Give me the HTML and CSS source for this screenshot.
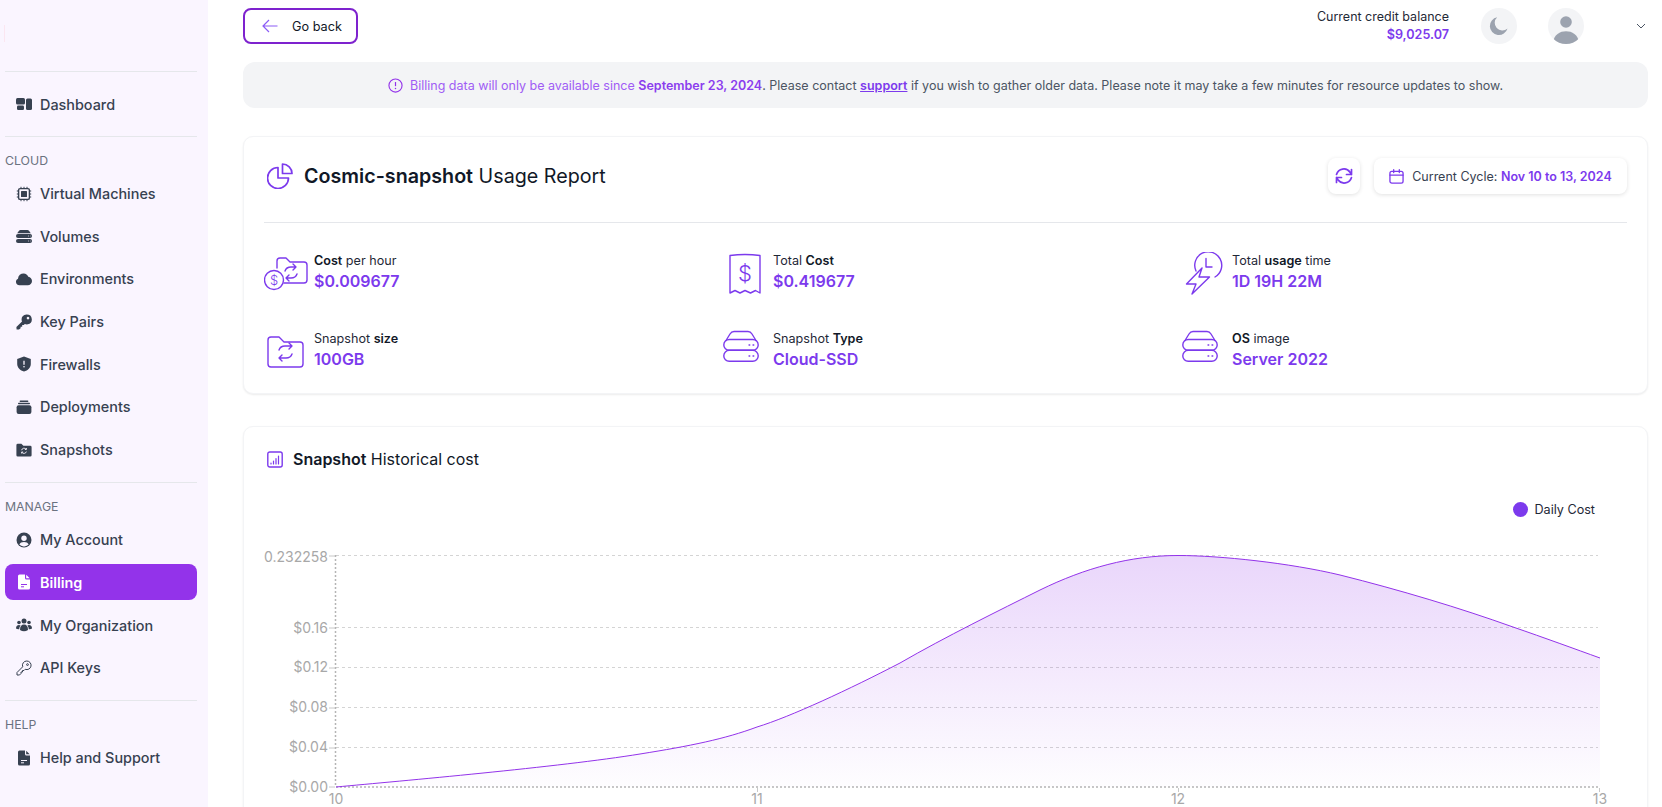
FILE: index.html
```html
<!DOCTYPE html>
<html lang="en">
<head>
    <meta charset="UTF-8">
    <title>Cosmic-snapshot Usage Report</title>
    <link rel="stylesheet" href="styles.css">
</head>
<body>
    <aside class="sidebar">
        <div class="logo"></div>
        <div class="nav-section nav-first">
            <a class="nav-item"><svg viewBox="0 0 16 16"><rect x="0" y="2" width="9" height="6.5" rx="1.5"/><rect x="1" y="9.5" width="7" height="4.5" rx="1.2"/><rect x="10" y="2.5" width="6" height="11.5" rx="1.5"/></svg>Dashboard</a>
        </div>
        <div class="nav-section">
            <div class="nav-label">CLOUD</div>
            <a class="nav-item"><svg viewBox="0 0 16 16"><rect x="2.6" y="2.6" width="10.8" height="10.8" rx="1.5" fill="none" stroke="#374151" stroke-width="1.4"/><rect x="5" y="5" width="6" height="6" rx=".5"/><path d="M5 .8v1.4M8 .8v1.4M11 .8v1.4M5 13.8v1.4M8 13.8v1.4M11 13.8v1.4M.8 5h1.4M.8 8h1.4M.8 11h1.4M13.8 5h1.4M13.8 8h1.4M13.8 11h1.4" stroke="#374151" stroke-width="1" fill="none"/></svg>Virtual Machines</a>
            <a class="nav-item"><svg viewBox="0 0 16 16"><path d="M1.2 5.2 3 2.8Q3.6 2 4.6 2h6.8q1 0 1.6.8l1.8 2.4z"/><rect x="0" y="6" width="16" height="4" rx="2"/><rect x="0" y="11" width="16" height="4" rx="2"/><path d="M12 8h.8M14 8h.5M12 13h.8M14 13h.5" stroke="#faf5ff" stroke-width=".8"/></svg>Volumes</a>
            <a class="nav-item"><svg viewBox="0 0 16 16"><path d="M3.4 14.2A3.4 3.4 0 0 1 2 7.7 5.6 5.6 0 0 1 7.8 2.4c2 0 3.8 1.3 4.5 3.3 2.1.3 3.7 2 3.7 4.2 0 2.4-1.9 4.3-4.2 4.3z"/></svg>Environments</a>
            <a class="nav-item"><svg viewBox="0 0 16 16"><path d="M10.8.4a5 5 0 0 1 1 9.9 5 5 0 0 1-3-.4l-1 1.2H6.2v1.6H4.6v1.6L3 15.6H.6L.4 13l5.6-5.6A5 5 0 0 1 10.8.4zm1.2 2.4a1.3 1.3 0 1 0 .01 0z" fill-rule="evenodd"/></svg>Key Pairs</a>
            <a class="nav-item"><svg viewBox="0 0 16 16"><path d="M8 .6 14.8 3v5c0 3.8-3 6.4-6.8 7.5C4.2 14.4 1.2 11.8 1.2 8V3z"/><path d="M8 4.8v4" stroke="#faf5ff" stroke-width="1.3"/><circle cx="8" cy="10.8" r=".8" fill="#faf5ff"/></svg>Firewalls</a>
            <a class="nav-item"><svg viewBox="0 0 16 16"><rect x="0.6" y="6.2" width="14.8" height="8.8" rx="2"/><rect x="2" y="3.8" width="12" height="1.5" rx=".7"/><rect x="3.6" y="1.6" width="8.8" height="1.4" rx=".7"/></svg>Deployments</a>
            <a class="nav-item"><svg viewBox="0 0 16 16"><path d="M.4 3.2Q.4 1.8 1.8 1.8h3.6l2 2h6.8q1.4 0 1.4 1.4v8q0 1.4-1.4 1.4H1.8q-1.4 0-1.4-1.4z"/><path d="M5.6 8.2A2.5 2.5 0 0 1 10 7.2m.4-1.2v1.5H8.9M10.4 9.6A2.5 2.5 0 0 1 6 10.4m-.4 1.1V10h1.5" stroke="#faf5ff" stroke-width=".9" fill="none"/></svg>Snapshots</a>
        </div>
        <div class="nav-section">
            <div class="nav-label">MANAGE</div>
            <a class="nav-item"><svg viewBox="0 0 16 16"><circle cx="8" cy="8" r="7.5"/><circle cx="8" cy="6.2" r="2.7" fill="#faf5ff"/><path d="M3.3 12.6C4 10.6 5.8 9.9 8 9.9s4 .7 4.7 2.7A6 6 0 0 1 8 14.4a6 6 0 0 1-4.7-1.8z" fill="#faf5ff"/></svg>My Account</a>
            <a class="nav-item active"><svg viewBox="0 0 16 16"><path d="M2 2q0-1.5 1.5-1.5H9V4q0 1.5 1.5 1.5H14v8.500q0 1.500-1.500 1.500h-9Q2 15.500 2 14z" fill="#fff"/><path d="M10.200.8 13.700 4.300h-3.500z" fill="#fff"/><path d="M5 10.500h6M5 12.800h3" stroke="#9333ea" stroke-width="1"/></svg>Billing</a>
            <a class="nav-item"><svg viewBox="0 0 16 16"><circle cx="8" cy="4" r="2.5"/><circle cx="3" cy="5.5" r="1.8"/><circle cx="13" cy="5.5" r="1.8"/><path d="M4 13q0-5.500 4-5.500t4 5.500q-2 1.200-4 1.200T4 13z"/><path d="M0 11.500Q0 8 3 8q1 0 1.600.5Q3.200 10 3.200 12.300 1 12.500 0 11.500zM16 11.500Q16 8 13 8q-1 0-1.600.5 1.400 1.500 1.400 3.800 2.200.2 3.200-.8z"/></svg>My Organization</a>
            <a class="nav-item"><svg viewBox="0 0 16 16" class="line-icon"><path d="M10.800 1a4.300 4.300 0 1 1-1.600 8.300L8 10.500H6.500V12H5v1.500L3.500 15H1v-2.500l5.700-5.700A4.300 4.300 0 0 1 10.800 1z"/><circle cx="11.500" cy="4.600" r=".9"/></svg>API Keys</a>
        </div>
        <div class="nav-section">
            <div class="nav-label">HELP</div>
            <a class="nav-item"><svg viewBox="0 0 16 16"><path d="M2 2q0-1.500 1.500-1.500H9V4q0 1.500 1.500 1.500H14v8.500q0 1.500-1.500 1.500h-9Q2 15.500 2 14z"/><path d="M10.200.8 13.700 4.300h-3.500z"/><path d="M5 10.500h6M5 12.800h3" stroke="#faf5ff" stroke-width="1"/></svg>Help and Support</a>
        </div>
    </aside>

    <main class="main">
        <header class="topbar">
            <a class="back-btn">
                <svg viewBox="0 0 16 14" width="16" height="14" class="back-arrow"><path d="M15.500 7H1M7 1 1 7l6 6"/></svg>
                Go back
            </a>
            <div class="top-right">
                <div class="credit">
                    <div>Current credit balance</div>
                    <strong>$9,025.07</strong>
                </div>
                <div class="round-btn moon"><svg viewBox="0 0 20 20" width="20" height="20"><path d="M8.200 1.200A9 9 0 1 0 18.500 12.500 7.500 7.500 0 0 1 8.200 1.200z" fill="#9ca3af"/></svg></div>
                <div class="round-btn avatar"><svg viewBox="0 0 36 36" width="36" height="36"><circle cx="18" cy="14" r="5.800" fill="#9ca3af"/><path d="M4.500 36C6 26 12 23.200 18 23.200S30 26 31.500 36z" fill="#9ca3af"/></svg></div>
                <svg class="chevron" viewBox="0 0 10 6" width="10" height="6"><path d="M1 1l4 4 4-4"/></svg>
            </div>
        </header>

        <div class="notice">
            <svg viewBox="0 0 16 16" width="15" height="15"><circle cx="8" cy="8" r="7" fill="none" stroke="#9333ea" stroke-width="1.200"/><path d="M8 4.300v4.400" stroke="#9333ea" stroke-width="1.300"/><circle cx="8" cy="11.200" r=".8" fill="#9333ea"/></svg>
            <p><span class="notice-accent">Billing data will only be available since <b>September 23, 2024</b></span>. Please contact <a class="notice-link">support</a> if you wish to gather older data. Please note it may take a few minutes for resource updates to show.</p>
        </div>

        <section class="card report-card">
            <div class="report-head">
                <h1>
                    <svg viewBox="0 0 26 26" width="26" height="26" class="stat-line thick"><path d="M11 4.500a10.500 10.500 0 1 0 10.500 10.500H11z"/><path d="M15.500 1a9.500 9.500 0 0 1 9.500 9.500h-9.500z"/></svg>
                    <span><b>Cosmic-snapshot</b> Usage Report</span>
                </h1>
                <div class="head-actions">
                    <div class="ghost-btn refresh">
                        <svg viewBox="0 0 18 18" width="18" height="18" class="stat-line thick"><path d="M1.500 7.500A7.600 7.600 0 0 1 15 5.200l1.500 2.300M16.500 2.500v5h-5M16.500 10.500A7.600 7.600 0 0 1 3 12.800l-1.500-2.300M1.500 15.500v-5h5"/></svg>
                    </div>
                    <div class="ghost-btn cycle">
                        <svg viewBox="0 0 16 16" width="15" height="15" class="stat-line"><rect x="1" y="2.500" width="14" height="12.500" rx="2"/><path d="M1 6.500h14M5 .8v3M11 .8v3"/></svg>
                        <span>Current Cycle: <b>Nov 10 to 13, 2024</b></span>
                    </div>
                </div>
            </div>
            <div class="stats">
                <div class="stat">
                    <svg viewBox="0 0 50 46" class="stat-line"><path d="M13 16V9a3 3 0 0 1 3-3h6l4 4h14a3 3 0 0 1 3 3v15a3 3 0 0 1-3 3H20"/><circle cx="10" cy="28" r="9.500"/><text x="10" y="33" class="icon-dollar-sm">$</text><path d="M21 19c1-3 3-4 6-4h5m-3-3 3 3-3 3M33 22c-1 3-3 4-6 4h-5m3 3-3-3 3-3"/></svg>
                    <div><div class="stat-label"><b>Cost</b> per hour</div><div class="stat-value">$0.009677</div></div>
                </div>
                <div class="stat">
                    <svg viewBox="0 0 50 46" class="stat-line"><path d="M7 3.500Q22 1.500 37 3.500V41l-4.500-2.500-5 2.500-5.500-2.500-5 2.500-5-2.500L7 41z"/><text x="22" y="29" class="icon-dollar">$</text></svg>
                    <div><div class="stat-label">Total <b>Cost</b></div><div class="stat-value">$0.419677</div></div>
                </div>
                <div class="stat">
                    <svg viewBox="0 0 50 46" class="stat-line"><path d="M14 19A13.500 13.500 0 1 1 33 25"/><path d="M24 6.500V15h6"/><path d="M20 16 4.500 32H14L10 42l17.500-17H17z"/></svg>
                    <div><div class="stat-label">Total <b>usage</b> time</div><div class="stat-value">1D 19H 22M</div></div>
                </div>
                <div class="stat">
                    <svg viewBox="0 0 50 46" class="stat-line"><path d="M4 10a3 3 0 0 1 3-3h8l5 5h16a3 3 0 0 1 3 3v19a3 3 0 0 1-3 3H7a3 3 0 0 1-3-3z"/><path d="M15 20c1-3 3-4 6-4h7m-3-3 3 3-3 3M28 24c-1 3-3 4-6 4h-7m3 3-3-3 3-3"/></svg>
                    <div><div class="stat-label">Snapshot <b>size</b></div><div class="stat-value">100GB</div></div>
                </div>
                <div class="stat">
                    <svg viewBox="0 0 50 46" class="stat-line"><path d="M3 10.500 7 4Q8.500 1.500 11 1.500h14q2.500 0 4 2.500l4 6.500"/><rect x=".8" y="9.500" width="34.400" height="10.800" rx="5.400"/><rect x=".8" y="20.300" width="34.400" height="11" rx="5.400"/><path d="M26 15h.8M30 15h.8M26 26h.8M30 26h.8" stroke-width="1.300"/></svg>
                    <div><div class="stat-label">Snapshot <b>Type</b></div><div class="stat-value">Cloud-SSD</div></div>
                </div>
                <div class="stat">
                    <svg viewBox="0 0 50 46" class="stat-line"><path d="M3 10.500 7 4Q8.500 1.500 11 1.500h14q2.500 0 4 2.500l4 6.500"/><rect x=".8" y="9.500" width="34.400" height="10.800" rx="5.400"/><rect x=".8" y="20.300" width="34.400" height="11" rx="5.400"/><path d="M26 15h.8M30 15h.8M26 26h.8M30 26h.8" stroke-width="1.300"/></svg>
                    <div><div class="stat-label"><b>OS</b> image</div><div class="stat-value">Server 2022</div></div>
                </div>
            </div>
        </section>

        <section class="card chart-card">
            <h2>
                <svg viewBox="0 0 16 17" width="16" height="17" class="stat-line"><rect x=".8" y="1" width="14.400" height="15" rx="2"/><path d="M4 13v-1M6.500 13v-3M9 13V7.500M11.500 13V5" stroke-width="1.200"/></svg>
                <span><b>Snapshot</b> Historical cost</span>
            </h2>
            <div class="legend"><i class="legend-dot"></i>Daily Cost</div>
            <svg class="chart" viewBox="243 540 1405 275" width="1405" height="275">
                <defs>
                    <linearGradient id="areaFill" x1="0" y1="0" x2="0" y2="1">
                        <stop offset="0" stop-color="#9333ea" stop-opacity=".2"/>
                        <stop offset="1" stop-color="#9333ea" stop-opacity=".01"/>
                    </linearGradient>
                </defs>
                <g class="grid">
                    <path d="M336 555.500H1598M336 627.500H1598M336 667.500H1598M336 707.500H1598M336 747.500H1598"/>
                </g>
                <path class="axis" d="M336 787H1598M335.500 555V787"/>
                <path class="ticks" d="M329 556h6M329 628h6M329 668h6M329 708h6M329 748h6M329 787h6M757.500 788v4M1178.500 788v4M1599.500 788v4"/>
                <path class="area" d="M336 787C400 781 560 767 640 754C690 746 725 739 757 727C790 717 850 689 900 663C945 637 1000 610 1040 590C1085 568 1130 555.500 1178 555.500C1220 555.500 1290 563 1340 575C1400 590 1460 608 1513 627C1545 638 1575 649 1600 658V787H336Z"/>
                <path class="curve" d="M336 787C400 781 560 767 640 754C690 746 725 739 757 727C790 717 850 689 900 663C945 637 1000 610 1040 590C1085 568 1130 555.500 1178 555.500C1220 555.500 1290 563 1340 575C1400 590 1460 608 1513 627C1545 638 1575 649 1600 658"/>
                <g class="y-labels">
                    <text x="328" y="562">0.232258</text>
                    <text x="328" y="633">$0.16</text>
                    <text x="328" y="672">$0.12</text>
                    <text x="328" y="712">$0.08</text>
                    <text x="328" y="752">$0.04</text>
                    <text x="328" y="792">$0.00</text>
                </g>
                <g class="x-labels">
                    <text x="336" y="804">10</text>
                    <text x="757" y="804">11</text>
                    <text x="1178" y="804">12</text>
                    <text x="1600" y="804">13</text>
                </g>
            </svg>
        </section>
    </main>
</body>
</html>
```

FILE: styles.css
```css
* {
    box-sizing: border-box;
}

body {
    margin: 0;
    height: 807px;
    overflow: hidden;
    display: flex;
    font-family: 'Inter', 'Liberation Sans', sans-serif;
    background-color: #ffffff;
    color: #111827;
}

/* sidebar */
.sidebar {
    flex: 0 0 208px;
    padding: 0 11px 0 5px;
    background-color: #faf5ff;
}

.logo {
    height: 72px;
    padding-top: 25px;
    border-bottom: 1px solid #e5e7eb;
}

.logo::before {
    content: "";
    display: block;
    width: 1px;
    height: 17px;
    margin-left: -1px;
    background-color: #fbe6f1;
}

.nav-section {
    padding: 15px 0 14px;
    border-bottom: 1px solid #e5e7eb;
    display: flex;
    flex-direction: column;
    gap: 6.67px;
}

.nav-section.nav-first {
    padding: 14px 0 13.5px;
}

.nav-section:last-child {
    border-bottom: none;
}

.nav-label {
    font-size: 12.3px;
    line-height: 18px;
    margin: 0 0 -0.5px;
    color: #6b7280;
}

.nav-item {
    height: 36px;
    display: flex;
    align-items: center;
    gap: 8px;
    padding-left: 11px;
    border-radius: 8px;
    font-size: 14.4px;
    font-weight: 500;
    color: #374151;
}

.nav-item svg {
    width: 16px;
    height: 16px;
    flex: none;
    fill: #374151;
}

.nav-item svg.line-icon {
    fill: none;
    stroke: #374151;
    stroke-width: 1;
}

.nav-item.active {
    background-color: #9333ea;
    color: #ffffff;
    font-weight: 600;
}

/* main column */
.main {
    flex: 1;
    min-width: 0;
    padding: 8px 14px 0 35px;
}

.topbar {
    height: 36px;
    display: flex;
    justify-content: space-between;
    align-items: center;
}

.back-btn {
    width: 115px;
    height: 36px;
    display: flex;
    align-items: center;
    gap: 14px;
    padding-left: 17px;
    border: 2px solid #7e22ce;
    border-radius: 8px;
    font-size: 12.7px;
    font-weight: 400;
    color: #111827;
}

.back-arrow {
    fill: none;
    stroke: #8b5cf6;
    stroke-width: 1.2;
}

.top-right {
    display: flex;
    align-items: center;
}

.credit {
    text-align: right;
    font-size: 12.5px;
    line-height: 18px;
    color: #1f2937;
    margin-right: 32px;
}

.credit strong {
    display: block;
    font-size: 12.6px;
    color: #7c3aed;
    font-weight: 600;
}

.round-btn {
    width: 36px;
    height: 36px;
    border-radius: 50%;
    background-color: #f3f4f6;
    display: flex;
    align-items: center;
    justify-content: center;
    overflow: hidden;
}

.moon {
    margin-right: 31px;
}

.chevron {
    margin: 0 2px 0 52px;
    fill: none;
    stroke: #4b5563;
    stroke-width: 1;
}

.notice {
    height: 46px;
    margin-top: 18px;
    border-radius: 12px;
    background-color: #f3f4f6;
    display: flex;
    align-items: center;
    justify-content: center;
    gap: 7px;
    font-size: 12.5px;
    color: #4b5563;
}

.notice p {
    margin: 0;
}

.notice-accent {
    color: #a05cf5;
}

.notice-accent b {
    color: #8b3dee;
    font-weight: 600;
}

.notice-link {
    color: #7c3aed;
    font-weight: 600;
    text-decoration: underline;
}

.card {
    margin-top: 28px;
    background-color: #ffffff;
    border: 1px solid #f3f4f6;
    border-radius: 10px;
    box-shadow: 0 1px 2px rgba(0, 0, 0, 0.08);
}

.report-card {
    height: 258px;
    padding: 21px 20px 0;
}

.stat-line {
    fill: none;
    stroke: #7c3aed;
    stroke-width: 1.4;
    stroke-linejoin: round;
    stroke-linecap: round;
}

.stat-line.thick {
    stroke-width: 1.7;
}

.report-head {
    height: 65px;
    padding-bottom: 28px;
    border-bottom: 1px solid #e5e7eb;
    display: flex;
    justify-content: space-between;
    align-items: center;
}

.report-head h1 {
    margin: 0;
    padding-left: 3px;
    display: flex;
    align-items: center;
    gap: 11px;
    font-size: 19.7px;
    font-weight: 400;
}

.report-head b {
    font-weight: 600;
}

.head-actions {
    display: flex;
    gap: 14px;
}

.ghost-btn {
    height: 36px;
    border-radius: 8px;
    background-color: #ffffff;
    box-shadow: 0 1px 4px rgba(0, 0, 0, 0.12);
    display: flex;
    align-items: center;
    justify-content: center;
}

.refresh {
    width: 32px;
}

.cycle {
    width: 253px;
    gap: 8px;
    font-size: 12.5px;
    color: #374151;
}

.cycle b {
    color: #7c3aed;
    font-weight: 600;
}

.stats {
    margin-top: 29px;
    display: grid;
    grid-template-columns: repeat(3, 1fr);
    column-gap: 14px;
    row-gap: 36px;
}

.stat {
    height: 42px;
    display: flex;
}

.stat > svg {
    width: 50px;
    height: 46px;
    flex: none;
}

.stat-label {
    font-size: 12.6px;
    line-height: 18px;
    color: #1f2937;
}

.stat-label b {
    color: #111827;
    font-weight: 600;
}

.stat-value {
    font-size: 16px;
    line-height: 23px;
    font-weight: 600;
    color: #7c3aed;
}

.icon-dollar,
.icon-dollar-sm {
    font-size: 22px;
    font-weight: 300;
    text-anchor: middle;
    fill: #7c3aed;
    stroke: none;
}

.icon-dollar-sm {
    font-size: 13px;
}

.chart-card {
    margin-top: 32px;
    height: 420px;
    padding-top: 21px;
}

.chart-card h2 {
    margin: 0;
    padding-left: 23px;
    height: 22px;
    display: flex;
    align-items: center;
    gap: 10px;
    font-size: 16px;
    font-weight: 400;
}

.chart-card h2 b {
    font-weight: 600;
}

.legend {
    margin-top: 29px;
    padding-right: 52px;
    height: 20px;
    display: flex;
    align-items: center;
    justify-content: flex-end;
    gap: 7px;
    font-size: 12.6px;
    color: #1f2937;
}

.legend-dot {
    width: 15px;
    height: 15px;
    border-radius: 50%;
    background-color: #7c3aed;
}

.chart {
    display: block;
    margin-top: 21px;
    margin-left: -1px;
}

.grid path {
    fill: none;
    stroke: #d4d4d4;
    stroke-dasharray: 3 3;
}

.axis {
    fill: none;
    stroke: #b5b5b5;
    stroke-width: 1.5;
    stroke-dasharray: 2 2;
}

.ticks {
    fill: none;
    stroke: #c8c8c8;
}

.area {
    fill: url(#areaFill);
}

.curve {
    fill: none;
    stroke: #9333ea;
    stroke-width: 1;
}

.y-labels text,
.x-labels text {
    font-size: 14px;
    fill: #a8a8a8;
}

.y-labels text {
    text-anchor: end;
}

.x-labels text {
    text-anchor: middle;
}
```
